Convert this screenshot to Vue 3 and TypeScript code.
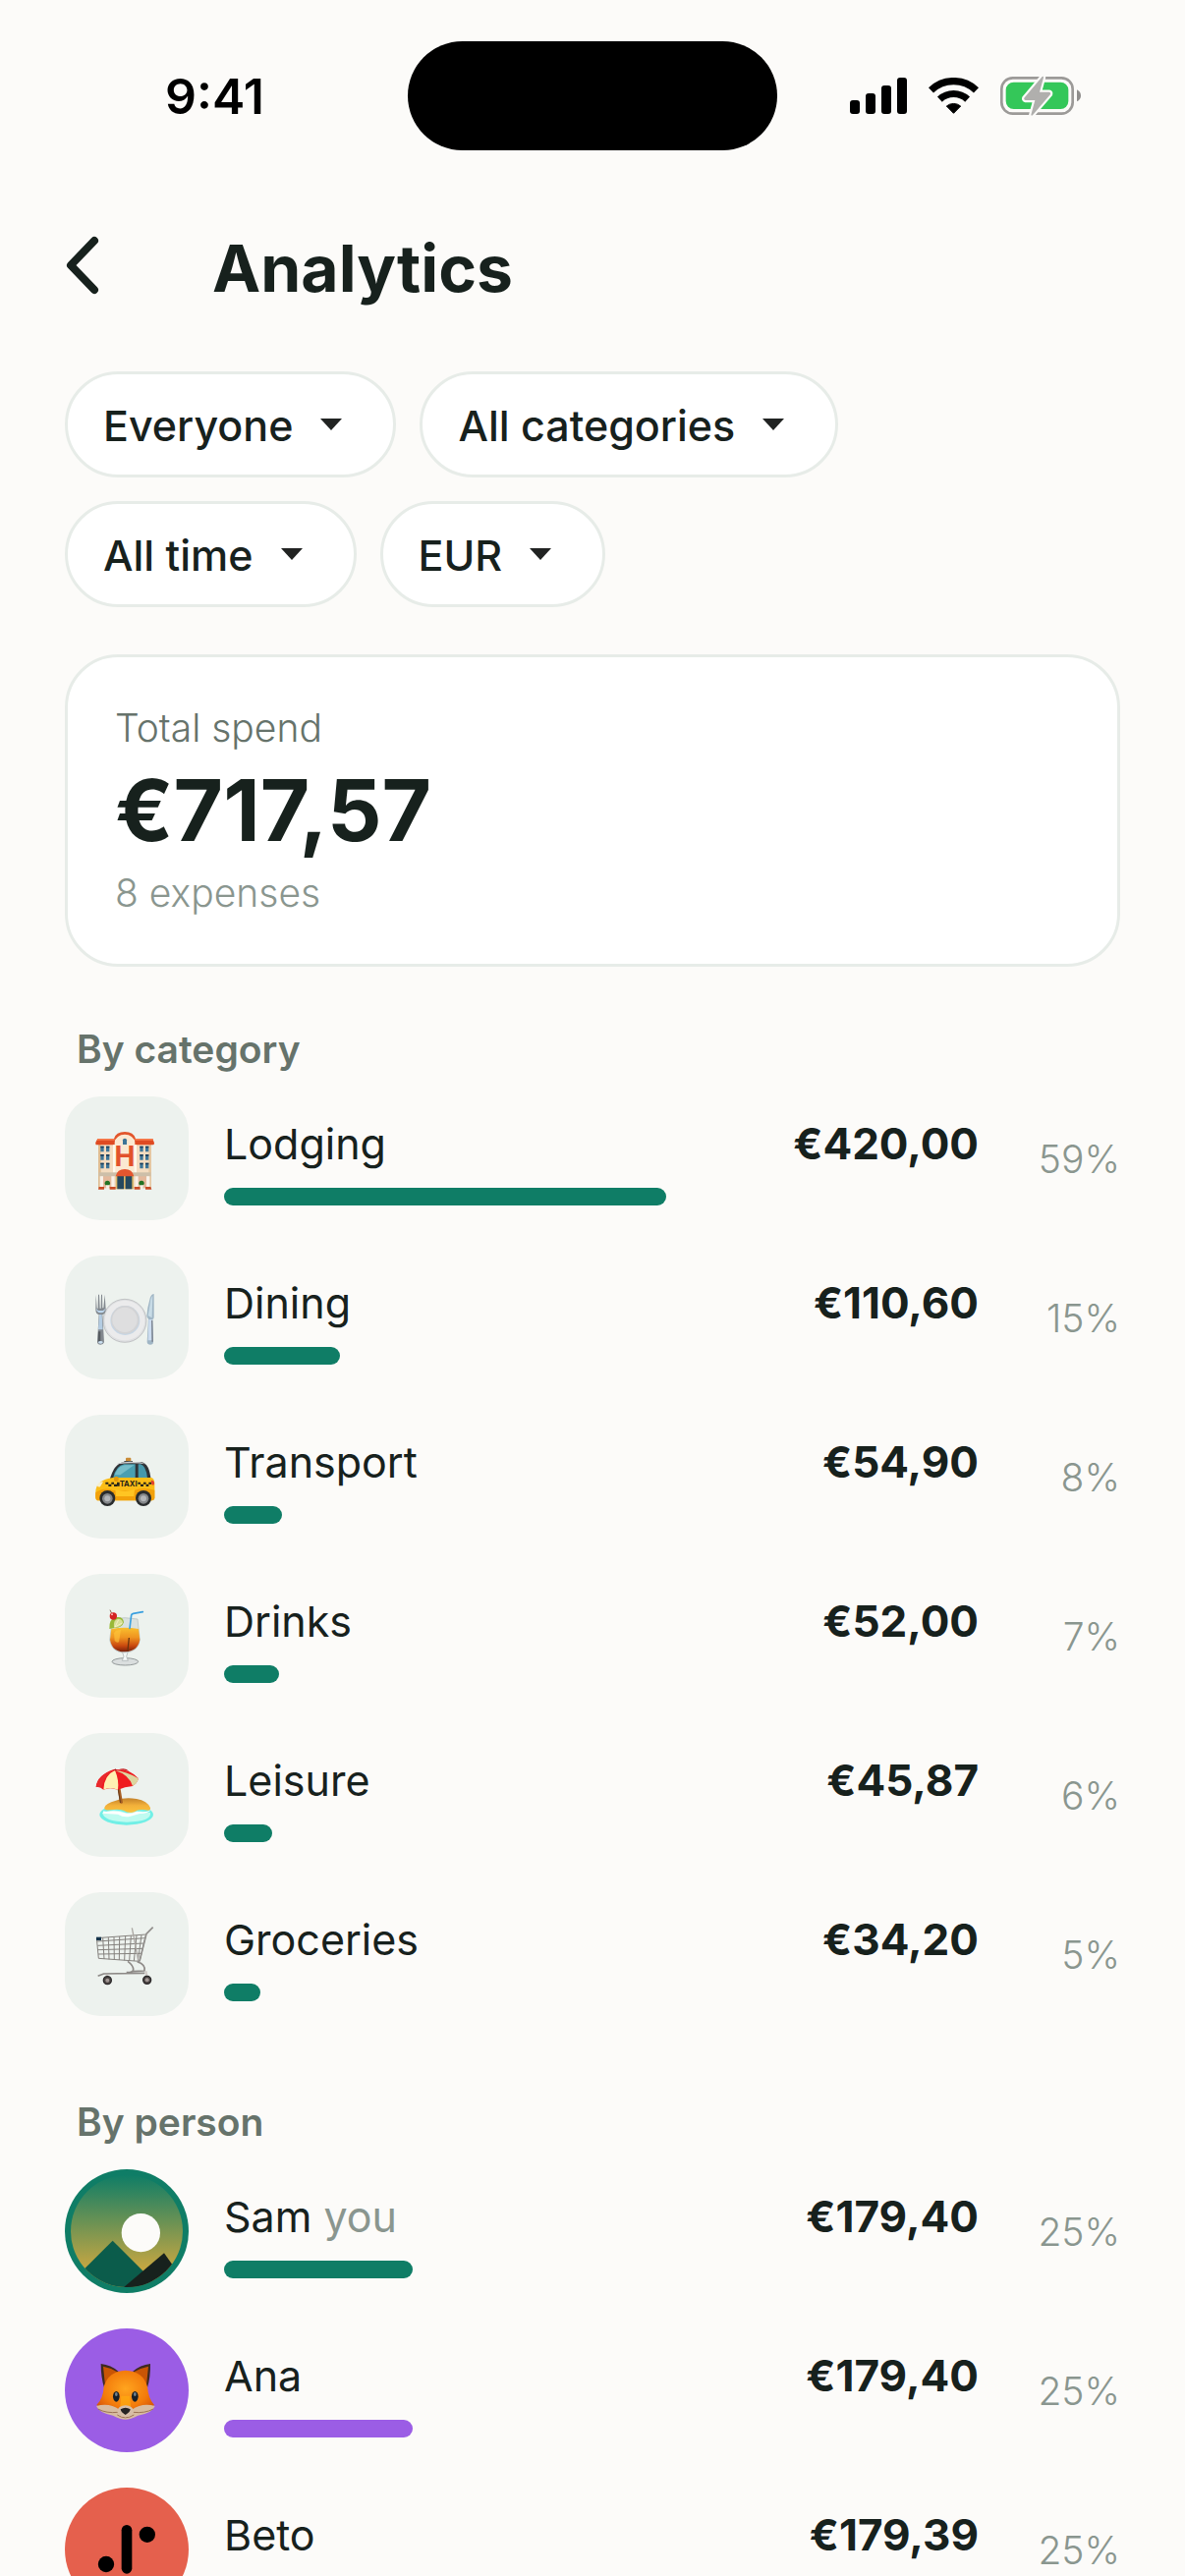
<script setup lang="ts">
import { computed, ref } from 'vue'

interface Filter {
  id: string
  label: string
  options: string[]
}

interface Entry {
  id: string
  name: string
  amount: number
  viewBox: string
  tint?: string
  you?: boolean
}

const filters: Filter[] = [
  { id: 'who', label: 'Person', options: ['Everyone', 'Sam', 'Ana', 'Beto'] },
  { id: 'category', label: 'Category', options: ['All categories', 'Lodging', 'Dining', 'Transport', 'Drinks', 'Leisure', 'Groceries'] },
  { id: 'period', label: 'Period', options: ['All time', 'This month', 'This week'] },
  { id: 'currency', label: 'Currency', options: ['EUR', 'USD', 'GBP'] },
]
const selected = ref<string[]>(filters.map((f) => f.options[0]))

const categories: Entry[] = [
  { id: 'lodging', name: 'Lodging', amount: 420, viewBox: '18 18 378 378' },
  { id: 'dining', name: 'Dining', amount: 110.6, viewBox: '18 504 378 378' },
  { id: 'transport', name: 'Transport', amount: 54.9, viewBox: '18 30 378 378' },
  { id: 'drinks', name: 'Drinks', amount: 52, viewBox: '18 516 378 378' },
  { id: 'leisure', name: 'Leisure', amount: 45.87, viewBox: '18 42 378 378' },
  { id: 'groceries', name: 'Groceries', amount: 34.2, viewBox: '18 528 378 378' },
]

const people: Entry[] = [
  { id: 'sam', name: 'Sam', amount: 179.4, viewBox: '18 264 378 378', tint: '#0f7d66', you: true },
  { id: 'ana', name: 'Ana', amount: 179.4, viewBox: '18 30 378 378', tint: '#9b5de5' },
  { id: 'beto', name: 'Beto', amount: 179.39, viewBox: '18 516 378 378', tint: '#e5604d' },
]

const total = computed(() => categories.reduce((sum, c) => sum + c.amount, 0))
const sections = [
  { id: 'category', title: 'By category', rows: categories },
  { id: 'person', title: 'By person', rows: people },
]

const money = (value: number): string => '€' + value.toFixed(2).replace('.', ',')
const share = (value: number): number => (value / total.value) * 100
</script>

<template>
  <div class="screen">
    <div class="status">
      <span class="time">9:41</span>
      <div class="island"></div>
      <div class="indicators">
        <svg width="58" height="37" viewBox="75 87 174 111" aria-label="Signal">
          <rect x="75" y="156" width="30" height="42" rx="9" />
          <rect x="123" y="135" width="30" height="63" rx="9" />
          <rect x="171" y="111" width="30" height="87" rx="9" />
          <rect x="219" y="87" width="30" height="111" rx="9" />
        </svg>
        <svg width="51" height="37" viewBox="315 87 153 111" aria-label="Wi-Fi">
          <g fill="none" stroke="#000">
            <path d="M322.500 125.500A100 100 0 0 1 460.500 125.500" stroke-width="22" />
            <path d="M349.200 153.400A61.500 61.500 0 0 1 433.800 153.400" stroke-width="21" />
          </g>
          <path d="M391.500 196L370 174A34 34 0 0 1 413 174Z" stroke="#000" stroke-width="3" stroke-linejoin="round" />
        </svg>
        <svg width="82" height="41" viewBox="534 81 246 123" aria-label="Battery charging">
          <rect x="538" y="88" width="217" height="109" rx="34" fill="none" stroke="#9c9a98" stroke-width="8" />
          <rect x="551" y="101" width="191" height="82" rx="24" fill="#34c759" />
          <path d="M768 124Q780 130 780 142T768 160Z" fill="#8f8d8b" />
          <path d="M662 84L607 149Q605 155 611 156H640L628 200Q629 205 634 200L687 138Q689 132 683 131H654L666 87Q666 81 662 84Z" fill="#b0afad" stroke="#fcfbf9" stroke-width="13" stroke-linejoin="round" paint-order="stroke" />
        </svg>
      </div>
    </div>

    <header class="bar">
      <button class="back" type="button" aria-label="Back">
        <svg width="36" height="60" viewBox="0 0 36 60">
          <path d="M30 5L6 30L30 55" fill="none" stroke="currentColor" stroke-width="8" stroke-linecap="round" stroke-linejoin="round" />
        </svg>
      </button>
      <h1>Analytics</h1>
    </header>

    <main>
      <form class="filters" @submit.prevent>
        <div v-for="(filter, i) in filters" :key="filter.id" class="chip">
          <select :id="filter.id" v-model="selected[i]" :aria-label="filter.label">
            <option v-for="option in filter.options" :key="option">{{ option }}</option>
          </select>
          <svg class="caret" width="24" height="12" viewBox="0 0 24 12"><path d="M1 0H23L12 12Z" /></svg>
        </div>
      </form>

      <section class="card">
        <p class="label">Total spend</p>
        <p class="total">{{ money(total) }}</p>
        <p class="count">8 expenses</p>
      </section>

      <section v-for="section in sections" :key="section.id" class="group">
        <h2>{{ section.title }}</h2>
        <ul>
          <li v-for="row in section.rows" :key="row.id">
            <svg class="tile" :class="{ round: row.tint }" :style="{ backgroundColor: row.tint }" :viewBox="row.viewBox" aria-hidden="true">
              <g v-if="row.id === 'lodging'">
                <rect x="120" y="158" width="162" height="140" fill="#f4dcc0" />
                <rect x="120" y="158" width="8" height="140" fill="#dfbd92" />
                <rect x="274" y="158" width="8" height="140" fill="#e5c7a2" />
                <path d="M170 262V158Q174 130 201 130T232 158V262Z" fill="#fbe9d2" />
                <path d="M168 147V160Q176 134 201 134T234 160V147Q228 126 201 126T168 147Z" fill="#e2562c" />
                <path d="M118 147H170V166H113Q111 162 112 158ZM232 147H286L291 160Q291 166 288 166H232Z" fill="#df4b22" />
                <path d="M118 147H170V152H116ZM232 147H286L288 152H232Z" fill="#f77b4c" />
                <path d="M165 166h7v96h-7ZM230 166h7v96h-7Z" fill="#fff8ec" />
                <g fill="#3d7597">
                  <path d="M127 170h10v17h-10ZM144 170h10v17h-10ZM247 170h10v17h-10ZM264 170h10v17h-10ZM127 195h10v17h-10ZM144 195h10v17h-10ZM247 195h10v17h-10ZM264 195h10v17h-10ZM127 221h10v17h-10ZM144 221h10v17h-10ZM247 221h10v17h-10ZM264 221h10v17h-10Z" />
                  <path d="M195 165V151Q195 146 201 146T207 151V165Z" />
                </g>
                <path d="M127 170h10v5h-10ZM144 170h10v5h-10ZM247 170h10v5h-10ZM264 170h10v5h-10ZM127 195h10v5h-10ZM144 195h10v5h-10ZM247 195h10v5h-10ZM264 195h10v5h-10ZM127 221h10v5h-10ZM144 221h10v5h-10ZM247 221h10v5h-10ZM264 221h10v5h-10Z" fill="#1b3d5a" />
                <rect x="134" y="261" width="36" height="37" fill="#e4b99c" />
                <rect x="232" y="261" width="36" height="37" fill="#e4b99c" />
                <rect x="122" y="250" width="158" height="12" fill="#cdbfa9" />
                <path d="M125 262h10v34h-10ZM160 262h10v34h-10ZM232 262h10v34h-10ZM267 262h10v34h-10Z" fill="#f8f1e8" />
                <rect x="173" y="260" width="55" height="41" fill="#dab86c" />
                <path d="M178 261h20v40h-20ZM203 261h20v40h-20Z" fill="#25495e" />
                <path d="M173 262Q178 240 201 240T229 262Z" fill="#e5562f" />
                <path d="M122 294h16v8h-18ZM155 294h18v8h-18ZM230 294h18v8h-18ZM264 294h16l3 8h-19Z" fill="#c94c26" />
                <circle cx="148" cy="283" r="8" fill="#227324" />
                <circle cx="252" cy="283" r="8" fill="#227324" />
                <path d="M143 289h11l-2 11h-7ZM247 289h11l-2 11h-7Z" fill="#f4eee5" />
                <text x="201" y="232" class="sign" font-size="84" fill="#e2522b">H</text>
              </g>

              <g v-else-if="row.id === 'dining'">
                <circle cx="201" cy="703" r="66" fill="#dedfe1" stroke="#afb1b4" stroke-width="2" />
                <circle cx="201" cy="702" r="61" fill="#ebebec" />
                <circle cx="202" cy="702" r="45" fill="#c6d6e5" />
                <circle cx="202" cy="700" r="43" fill="#d2d3d5" />
                <circle cx="201" cy="700" r="38" fill="#dededf" />
                <path d="M113 623L112 668Q112 682 122 684L117 769Q118 776 127 776T138 769L133 684Q143 681 143 668L140 623L136 664H133L132 623H129L128 665H125L123 623H120L119 665H116Z" fill="#83898f" />
                <path d="M114 666Q114 678 127 679T141 666L135 672H120Z" fill="#bdd6ec" />
                <path d="M123 684H131L134 730H120Z" fill="#b4cce2" />
                <path d="M120 736H127V768H119Z" fill="#555b60" />
                <ellipse cx="127" cy="769" rx="7" ry="4" fill="#cbe0f2" />
                <path d="M290 621Q279 622 276 643Q270 662 268 688Q268 694 273 697L269 768Q270 776 279 776T288 768L286 699Q290 698 290 692Z" fill="#a0b6c5" />
                <path d="M286 626Q279 634 278 651L272 688L284 694Z" fill="#c7dbe6" />
                <path d="M274 699h10l1 64h-13Z" fill="#ccdcef" />
                <path d="M282 702h4l2 65h-5Z" fill="#7f8794" />
              </g>

              <g v-else-if="row.id === 'transport'">
                <rect x="204" y="161" width="16" height="14" rx="3" fill="#c98b35" />
                <path d="M199 171h26v7h-26Z" fill="#484948" />
                <path d="M154 232Q168 178 198 175H252Q277 179 281 232Z" fill="#303337" />
                <path d="M178 179Q205 170 247 175L264 181Q225 175 178 181Z" fill="#cdced0" />
                <path d="M165 224Q174 185 199 181H233V224Z" fill="#4a9fb1" />
                <path d="M188 188L201 184H229L187 214H170Q177 195 188 188Z" fill="#77bdc9" />
                <path d="M242 181H249Q266 185 270 224H242Z" fill="#4698ac" />
                <path d="M112 270Q111 249 124 238Q140 225 165 222H282Q293 225 292 245V284Q291 292 280 292H117Q110 291 112 270Z" fill="#fbbd16" />
                <path d="M112 267Q140 250 165 261H230Q255 250 292 260V284Q291 292 280 292H117Q110 291 112 267Z" fill="#f2a10b" />
                <path d="M172 258Q201 269 231 258L229 279H174Z" fill="#ffc522" />
                <path d="M142 236h9v6h-9ZM151 242h9v7h-9ZM160 236h8v6h-8ZM168 242h9v7h-9ZM177 236h8v12h-8ZM241 236h8v6h-8ZM249 242h9v7h-9ZM258 236h8v6h-8ZM266 242h8v7h-8ZM274 236h8v6h-8Z" fill="#262419" />
                <path d="M116 244Q126 232 135 235L126 250Q117 253 116 244Z" fill="#f5efcf" />
                <path d="M281 230Q291 230 291 239T283 243Z" fill="#df3f31" />
                <rect x="168" y="219" width="14" height="15" rx="5" fill="#e59a0a" />
                <text x="212" y="250" class="sign" font-size="23" fill="#262419">TAXI</text>
                <circle cx="148" cy="285" r="24" fill="#292c2d" />
                <circle cx="258" cy="285" r="24" fill="#292c2d" />
                <circle cx="148" cy="286" r="16" fill="#85888b" />
                <circle cx="258" cy="286" r="16" fill="#85888b" />
                <circle cx="148" cy="286" r="9" fill="#b3b6b9" />
                <circle cx="258" cy="286" r="9" fill="#b3b6b9" />
              </g>

              <g v-else-if="row.id === 'drinks'">
                <defs>
                  <linearGradient id="juice" x1="0" y1="0" x2="0" y2="1">
                    <stop offset="0" stop-color="#f9bf2e" />
                    <stop offset="0.4" stop-color="#ef9420" />
                    <stop offset="0.75" stop-color="#c9480e" />
                    <stop offset="1" stop-color="#75200c" />
                  </linearGradient>
                </defs>
                <ellipse cx="202" cy="784" rx="40" ry="11" fill="#dadede" stroke="#949a9a" stroke-width="3" />
                <path d="M193 753H211L206 768L211 781H193L198 768Z" fill="#f4f8f8" stroke="#a4aaaa" stroke-width="2" />
                <path d="M163 654Q201 646 240 654L247 718Q242 754 202 756T155 718Z" fill="#d9e1df" stroke="#b4bdbb" stroke-width="2" />
                <path d="M160 684Q201 676 243 684L247 717Q241 752 202 754T156 717Z" fill="url(#juice)" />
                <path d="M168 697Q172 686 189 687L183 724Q176 727 170 720Z" fill="#ffc83d" opacity="0.6" />
                <path d="M214 711L210 751" stroke="#6a330d" stroke-width="4" />
                <path d="M154 684Q152 652 177 648Q196 646 198 664Q192 682 169 681Z" fill="#99b937" />
                <path d="M168 680Q165 656 180 653Q194 653 195 665Q190 678 168 680Z" fill="#d8df98" />
                <path d="M171 678L182 656M171 678L193 666" stroke="#fff8d4" stroke-width="2" />
                <path d="M156 626L166 649" stroke="#8e6a50" stroke-width="3" />
                <circle cx="166" cy="645" r="11" fill="#d52222" />
                <circle cx="162" cy="640" r="3" fill="#fbb" />
                <path d="M216 682L221 642Q222 638 227 637L256 632" fill="none" stroke="#3ba0df" stroke-width="5" stroke-linecap="round" />
              </g>

              <g v-else-if="row.id === 'leisure'">
                <defs>
                  <linearGradient id="sand" x1="0" y1="0" x2="0" y2="1">
                    <stop offset="0" stop-color="#c4822a" />
                    <stop offset="0.5" stop-color="#f2b03a" />
                    <stop offset="1" stop-color="#fcc33e" />
                  </linearGradient>
                </defs>
                <ellipse cx="206" cy="291" rx="82" ry="32" fill="#71efe6" />
                <path d="M132 285Q170 269 207 286Q246 275 279 285Q284 312 207 314Q137 312 132 285Z" fill="#bffbf0" />
                <path d="M138 276Q132 284 158 281Q183 280 200 286Q216 292 238 281Q263 287 282 277Q269 289 247 288L218 296Q198 301 180 290Q154 289 134 287Z" fill="#fff" />
                <path d="M139 269Q142 257 174 248Q200 237 237 243Q270 249 279 270Q281 281 263 277Q241 274 230 283Q214 288 197 278Q180 273 155 277Q137 279 139 269Z" fill="url(#sand)" />
                <path d="M178 202L186 202L195 255Q190 259 186 255Z" fill="#a65f24" />
                <path d="M177 202L181 202L189 255H186Z" fill="#6c3f1d" />
                <path d="M113 206Q117 170 167 153Q218 150 243 181Q239 195 225 204Q201 206 180 215Q155 206 136 215Q126 205 113 206Z" fill="#ef1c20" />
                <path d="M171 156Q138 170 136 215Q155 207 180 215Q184 186 171 156Z" fill="#fff1b2" />
                <path d="M171 156Q204 158 243 181Q240 195 225 204Q214 169 171 156Z" fill="#ddd6a0" />
                <path d="M113 206Q121 169 165 156Q136 176 130 208Z" fill="#e9292c" />
                <path d="M167 156L172 151L178 157Z" fill="#a71515" />
                <path d="M181 154Q204 146 214 159Q202 155 181 154Z" fill="#c51b1f" />
              </g>

              <g v-else-if="row.id === 'groceries'">
                <g fill="none" stroke="#85827e" stroke-width="3" stroke-linejoin="round">
                  <path d="M115 668L266 657L246 739L121 730Z" />
                  <path d="M117 678L264 668M118 691L260 684M119 704L257 700M120 717L251 715" />
                  <path d="M134 667L138 732M151 666L153 733M168 665L169 734M185 663L184 735M203 662L200 736M220 661L215 737M237 660L229 738M252 659L241 738" />
                  <path d="M223 637L243 739" stroke="#aaa6a2" stroke-width="4" />
                  <path d="M287 635L267 655L246 739" stroke="#918e8b" stroke-width="5" />
                  <path d="M210 739Q228 752 227 765Q225 774 206 773M239 740Q266 749 261 768L225 770M119 784L137 777L262 775" stroke="#8d8986" stroke-width="5" />
                  <path d="M147 780V792M265 769L270 792" stroke="#d1ccc8" stroke-width="7" />
                </g>
                <rect x="114" y="665" width="15" height="10" fill="#16344b" />
                <g fill="#4d4644" stroke="#2b292a" stroke-width="4">
                  <circle cx="148" cy="797" r="12" />
                  <circle cx="269" cy="796" r="12" />
                </g>
                <g fill="#a29895">
                  <circle cx="148" cy="797" r="6" />
                  <circle cx="269" cy="796" r="6" />
                </g>
              </g>

              <g v-else-if="row.id === 'sam'">
                <defs>
                  <linearGradient id="dusk" x1="0" y1="0" x2="0" y2="1">
                    <stop offset="0" stop-color="#0f7d66" />
                    <stop offset="0.85" stop-color="#c9a741" />
                    <stop offset="1" stop-color="#d4ab3e" />
                  </linearGradient>
                  <clipPath id="disc"><circle cx="207" cy="453" r="171" /></clipPath>
                </defs>
                <g clip-path="url(#disc)">
                  <rect x="36" y="282" width="342" height="342" fill="url(#dusk)" />
                  <circle cx="250" cy="458" r="59" fill="#fcfbf9" />
                  <path d="M20 626L164 482L308 626Z" fill="#0b5c4b" />
                  <path d="M196 626L321 520L396 626Z" fill="#17211d" />
                </g>
              </g>

              <g v-else-if="row.id === 'ana'">
                <defs>
                  <radialGradient id="fur" cx="0.5" cy="0.4" r="0.65">
                    <stop offset="0" stop-color="#ffa51e" />
                    <stop offset="0.6" stop-color="#f37b0b" />
                    <stop offset="1" stop-color="#cf4c08" />
                  </radialGradient>
                </defs>
                <path d="M128 138Q159 141 182 162L138 211Q128 178 128 138ZM279 138Q248 141 225 162L270 211Q280 177 279 138Z" fill="#3e2a22" />
                <path d="M135 146Q158 150 178 163L141 205ZM273 146Q251 150 229 163L267 205Z" fill="#c95505" />
                <path d="M203 158Q257 160 270 208Q273 245 291 264Q249 298 203 299Q157 298 115 264Q135 245 137 208Q151 160 203 158Z" fill="url(#fur)" />
                <path d="M114 267Q153 255 185 278L203 271L222 278Q256 255 293 267Q285 289 241 296Q219 308 203 308Q187 308 165 296Q122 288 114 267Z" fill="#d8bca0" />
                <path d="M119 276Q145 290 180 286M288 276Q262 290 227 286M178 294Q202 311 229 294" fill="none" stroke="#9c7356" stroke-width="3" />
                <path d="M190 236L186 277Q203 264 220 277L216 236Z" fill="#ffad0f" opacity="0.7" />
                <ellipse cx="203" cy="283" rx="25" ry="18" fill="#d7bea7" />
                <path d="M188 277Q203 268 218 277Q217 286 203 294Q189 286 188 277Z" fill="#262322" />
                <ellipse cx="175" cy="238" rx="10" ry="16" fill="#182027" />
                <ellipse cx="232" cy="238" rx="10" ry="16" fill="#182027" />
                <ellipse cx="175" cy="231" rx="4" ry="6" fill="#718390" />
                <ellipse cx="232" cy="231" rx="4" ry="6" fill="#718390" />
              </g>

              <g v-else>
                <rect x="191" y="630" width="32" height="149" rx="16" />
                <circle cx="269.500" cy="659.500" r="24.500" />
                <circle cx="144" cy="750" r="24.500" />
              </g>
            </svg>

            <div class="detail">
              <div class="line">
                <span>{{ row.name }}<span v-if="row.you" class="you"> you</span></span>
                <strong>{{ money(row.amount) }}</strong>
              </div>
              <div class="fill" :style="{ width: share(row.amount) + '%', backgroundColor: row.tint }"></div>
            </div>
            <span class="percent">{{ Math.round(share(row.amount)) }}%</span>
          </li>
        </ul>
      </section>
    </main>
  </div>
</template>

<style>
body {
  margin: 0;
  background: #fcfbf9;
}
</style>

<style scoped>
.screen {
  box-sizing: border-box;
  height: 100vh;
  overflow-x: hidden;
  overflow-y: auto;
  scrollbar-width: none;
  background: #fcfbf9;
  color: #17211d;
  font-family: Inter, "Liberation Sans", sans-serif;
  font-size: 43px;
}

.status {
  display: grid;
  grid-template-columns: 1fr 376px 1fr;
  align-items: center;
  padding: 42px 0 33px;
  color: #000;
}

.time {
  padding-left: 168px;
  font-size: 50px;
  font-weight: 600;
}

.island {
  height: 111px;
  border-radius: 56px;
  background: #000;
}

.indicators {
  display: flex;
  align-items: center;
  justify-content: flex-end;
  gap: 22px;
  padding-right: 106px;
}

.bar {
  display: flex;
  align-items: center;
  height: 168px;
  padding: 0 66px;
}

.back {
  display: flex;
  width: 150px;
  padding: 0;
  border: 0;
  background: none;
  color: inherit;
}

h1,
h2,
p,
ul {
  margin: 0;
  padding: 0;
}

h1 {
  padding-top: 6px;
  font-size: 66px;
  font-weight: 700;
  line-height: 84px;
}

main {
  padding: 24px 66px 48px;
}

.filters {
  display: flex;
  flex-wrap: wrap;
  gap: 24px;
}

.chip {
  display: grid;
  align-items: center;
}

.chip > * {
  grid-area: 1 / 1;
}

select {
  field-sizing: content;
  appearance: none;
  box-sizing: border-box;
  height: 108px;
  padding: 2px 102px 0 36px;
  border: 3px solid #e7ece8;
  border-radius: 54px;
  background: #fff;
  color: inherit;
  font: inherit;
  font-weight: 500;
}

.caret {
  justify-self: end;
  margin-right: 54px;
  fill: #212322;
  pointer-events: none;
}

.card {
  margin-top: 48px;
  padding: 48px;
  border: 3px solid #e7ece8;
  border-radius: 54px;
  background: #fff;
}

.label,
.count {
  font-size: 39px;
  font-weight: 300;
  line-height: 48px;
}

.label {
  color: #66736b;
}

.count {
  color: #8a968f;
}

.total {
  font-size: 87px;
  font-weight: 700;
  line-height: 120px;
}

.group {
  margin-top: 60px;
}

.group + .group {
  margin-top: 84px;
}

h2 {
  padding-left: 12px;
  margin-bottom: 24px;
  color: #66736b;
  font-size: 39px;
  font-weight: 600;
  line-height: 48px;
}

ul {
  display: flex;
  flex-direction: column;
  gap: 36px;
  list-style: none;
}

li {
  display: flex;
  align-items: center;
}

.tile {
  flex: none;
  width: 126px;
  height: 126px;
  border-radius: 36px;
  background: #edf2ee;
}

.tile.round {
  border-radius: 50%;
}

.sign {
  font-weight: 700;
  text-anchor: middle;
}

.detail {
  flex: 1;
  margin-left: 36px;
}

.line {
  display: flex;
  justify-content: space-between;
  line-height: 66px;
}

.line strong {
  font-size: 44px;
  font-weight: 700;
}

.you {
  color: #8a968f;
}

.fill {
  height: 18px;
  margin-top: 12px;
  border-radius: 9px;
  background: #0f7d66;
}

.percent {
  width: 144px;
  color: #8a968f;
  font-size: 39px;
  font-weight: 300;
  text-align: right;
}
</style>
